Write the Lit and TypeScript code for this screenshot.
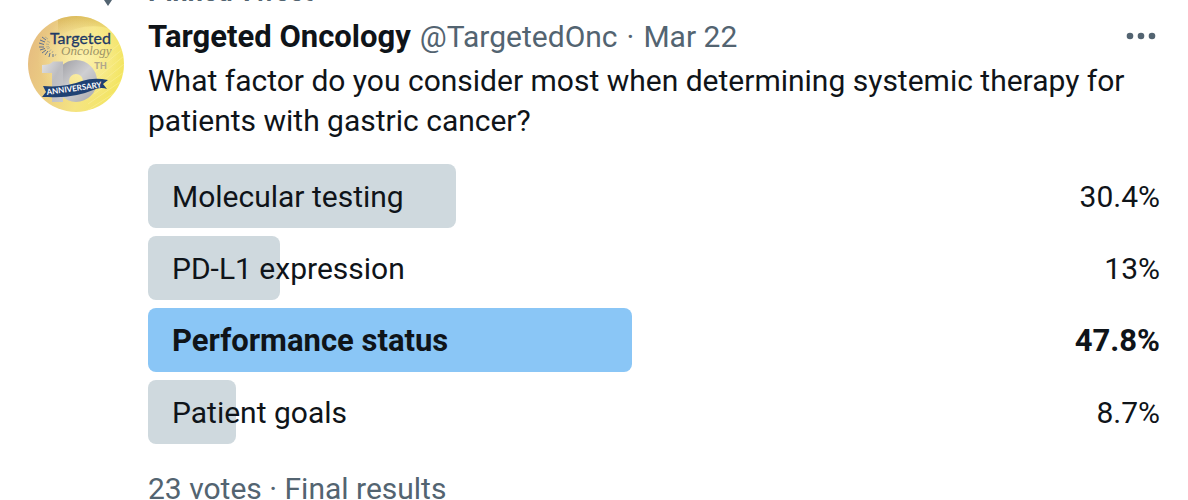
import { LitElement, html, css } from "lit";
import { customElement, property } from "lit/decorators.js";
import { classMap } from "lit/directives/class-map.js";
import { styleMap } from "lit/directives/style-map.js";

interface Choice {
  label: string;
  percent: number;
}

@customElement("tweet-avatar")
class TweetAvatar extends LitElement {
  static styles = css`
    :host { display: block; }
    .link { display: block; border-radius: 50%; overflow: hidden; }
    .logo { display: block; width: 100%; }
    .name { font: 400 16px Lato, sans-serif; fill: #1f3a66; stroke: #1f3a66; stroke-width: 0.3; }
    .sub { font: italic 13px "Liberation Serif", serif; fill: #9d9468; }
    .th { font: bold 9px Inter, sans-serif; fill: #b0a68c; }
    .ribbon-text { font: bold 8px Lato, sans-serif; fill: #fff; }
  `;

  render() {
    return html`
      <a class="link" href="#profile" aria-label="Targeted Oncology">
        <svg class="logo" viewBox="0 0 96 96" aria-hidden="true">
          <defs>
            <linearGradient id="gold" x1="0" y1="0.35" x2="1" y2="0.6">
              <stop offset="0" stop-color="#e6bd80" />
              <stop offset="0.3" stop-color="#ecd083" />
              <stop offset="0.6" stop-color="#f5e482" />
              <stop offset="1" stop-color="#f3e55f" />
            </linearGradient>
            <radialGradient id="glow" cx="0.55" cy="0.45" r="0.45">
              <stop offset="0" stop-color="#fff6b8" stop-opacity="0.8" />
              <stop offset="1" stop-color="#fff6b8" stop-opacity="0" />
            </radialGradient>
            <linearGradient id="shade" x1="0" y1="0" x2="0" y2="1">
              <stop offset="0" stop-color="#d5b24f" stop-opacity="0.7" />
              <stop offset="1" stop-color="#d5b24f" stop-opacity="0" />
            </linearGradient>
            <linearGradient id="silver" x1="0" y1="0" x2="1" y2="1">
              <stop offset="0" stop-color="#e2e2e4" />
              <stop offset="0.5" stop-color="#bcbcc0" />
              <stop offset="1" stop-color="#c9c9cc" />
            </linearGradient>
            <linearGradient id="steel" x1="0" y1="0" x2="1" y2="1">
              <stop offset="0" stop-color="#a9a9ae" />
              <stop offset="0.5" stop-color="#cfcfd2" />
              <stop offset="1" stop-color="#b3b3b7" />
            </linearGradient>
          </defs>
          <rect width="96" height="96" fill="url(#gold)" />
          <path d="M30 0H90L86 14Q60 4 30 20Z" fill="url(#shade)" />
          <rect width="96" height="96" fill="url(#glow)" />
          <g fill="none" stroke="#fff7b4" stroke-width="0.6" opacity="0.6">
            <path d="M96 24L60 54M96 32L62 60M96 40L64 66M96 48L66 72M96 56L66 78M92 66L60 88M88 76L60 94" />
          </g>
          <g fill="none" stroke="#5d7190" stroke-width="1">
            <path d="M14 21l4 3M12 24l5 2M11 27l5 1.500M11 31l5 0M12 34l5-1.500M14 37l4-3M17 39l3-4M21 41l1-4M25 41l0-3" />
          </g>
          <g fill="none" stroke="#a3a593" stroke-width="0.8">
            <path d="M19 25l3 1.500M18 28l3 0.500M18 31l3-0.500M19 33l3-1.500M21 36l2-2.500M24 37l1-2M27 40l1-2M17 21l3 2" />
          </g>
          <ellipse cx="48" cy="65" rx="14" ry="14" fill="none" stroke="url(#steel)" stroke-width="14" />
          <path d="M14 49Q22 49 25 45.500H35V86H24V57H14Z" fill="url(#silver)" />
          <text class="name" x="22" y="28">Targeted</text>
          <text class="sub" x="33" y="39">Oncology</text>
          <text class="th" x="66" y="53">TH</text>
          <path d="M15 70Q36 72 54 65Q66 61 80 64L75 68L79 73Q74 71 68 73Q44 83 20 81L14 81L18 76Z" fill="#1f4173" />
          <text class="ribbon-text" x="19" y="79" transform="rotate(-8 19 79)">ANNIVERSARY</text>
        </svg>
      </a>
    `;
  }
}

@customElement("poll-choice")
class PollChoice extends LitElement {
  static styles = css`
    :host { display: block; }
    .choice { display: grid; grid-template-columns: minmax(0, 1fr); height: 64px; line-height: 40px; }
    .bar, .text { grid-area: 1 / 1; }
    .bar { border-radius: 8px; background: #cfd9de; }
    .text { display: flex; align-items: center; justify-content: space-between; padding: 2px 0 0 24px; }
    .winner .bar { background: #8ac6f6; }
    .winner .text { font-size: 31px; font-weight: 700; }
  `;

  @property() label = "";
  @property({ type: Number }) percent = 0;
  @property({ type: Boolean }) winner = false;

  render() {
    return html`
      <div class=${classMap({ choice: true, winner: this.winner })}>
        <div class="bar" style=${styleMap({ width: `${this.percent}%` })}></div>
        <div class="text"><span>${this.label}</span><span>${this.percent}%</span></div>
      </div>
    `;
  }
}

@customElement("app-root")
class AppRoot extends LitElement {
  static styles = css`
    :host {
      display: block;
      height: 100vh;
      overflow: hidden;
      background: #fff;
      color: #0f1419;
      font-family: Roboto, sans-serif;
      font-size: 30px;
      line-height: 40px;
    }
    .tweet {
      display: grid;
      grid-template-columns: 96px minmax(0, 1fr);
      column-gap: 24px;
      padding: 0 28px;
      margin-top: -24px;
    }
    .pin { justify-self: end; width: 32px; height: 32px; fill: #536471; }
    .pinned { color: #536471; font-size: 27px; font-weight: 700; line-height: 32px; }
    .avatar { margin-top: 8px; }
    .body { padding-top: 9px; }
    .head { display: flex; align-items: center; justify-content: space-between; height: 40px; }
    .meta { display: flex; align-items: baseline; gap: 9px; color: #536471; }
    .meta a { color: inherit; text-decoration: none; }
    .meta .author { color: #0f1419; font-size: 31px; font-weight: 700; }
    .more { display: flex; padding: 0; border: 0; background: none; }
    .more svg { width: 38px; height: 38px; fill: #536471; }
    .question { margin: 4px 0 23px; }
    .poll { display: grid; gap: 8px; margin: 0; padding: 0; list-style: none; }
    .footer { margin: 25px 0 0; color: #536471; }
  `;

  choices: Choice[] = [
    { label: "Molecular testing", percent: 30.4 },
    { label: "PD-L1 expression", percent: 13 },
    { label: "Performance status", percent: 47.8 },
    { label: "Patient goals", percent: 8.7 },
  ];

  render() {
    const top = Math.max(...this.choices.map((c) => c.percent));
    return html`
      <article class="tweet">
        <svg class="pin" viewBox="0 0 32 32" aria-hidden="true">
          <path d="M9 0h14v3l-2 1v8l5 5v3h-6v4l-4 6-4-6v-4H6v-3l5-5V4L9 3z" />
        </svg>
        <div class="pinned">Pinned Tweet</div>
        <tweet-avatar class="avatar"></tweet-avatar>
        <div class="body">
          <header class="head">
            <div class="meta">
              <a class="author" href="#profile">Targeted Oncology</a>
              <a href="#profile">@TargetedOnc</a>
              <span>·</span>
              <a href="#status">Mar 22</a>
            </div>
            <button class="more" type="button" aria-label="More">
              <svg viewBox="0 0 38 38" aria-hidden="true">
                <circle cx="8" cy="18" r="3.300" />
                <circle cx="19" cy="18" r="3.300" />
                <circle cx="30" cy="18" r="3.300" />
              </svg>
            </button>
          </header>
          <p class="question">
            What factor do you consider most when determining systemic therapy for patients with gastric cancer?
          </p>
          <ul class="poll">
            ${this.choices.map(
              (c) => html`<li>
                <poll-choice .label=${c.label} .percent=${c.percent} .winner=${c.percent === top}></poll-choice>
              </li>`
            )}
          </ul>
          <p class="footer">23 votes · Final results</p>
        </div>
      </article>
    `;
  }
}
